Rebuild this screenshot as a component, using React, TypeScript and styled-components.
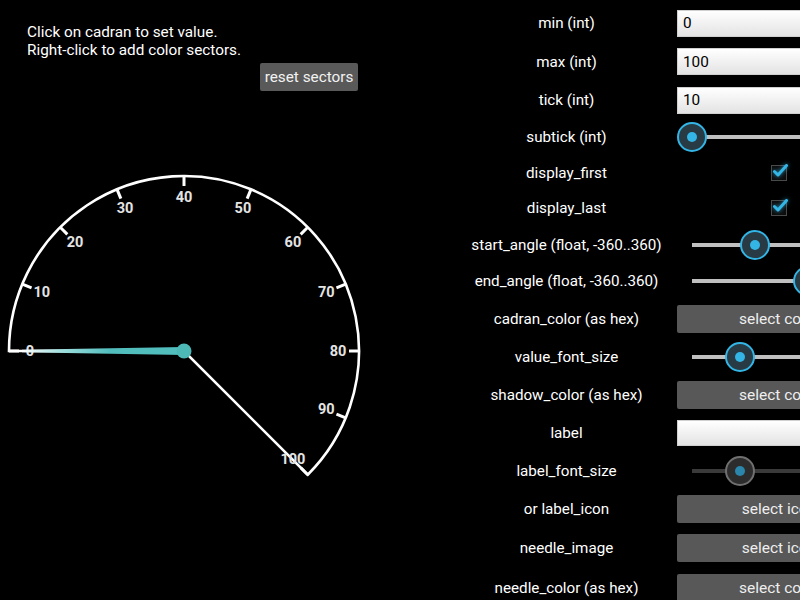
import React from 'react';
import styled, { createGlobalStyle } from 'styled-components';

const GlobalStyle = createGlobalStyle`
  html, body { margin: 0; padding: 0; background: #000; overflow: hidden; }
  body { font-family: Roboto, "Noto Sans", sans-serif; color: #fff; }
  * { box-sizing: border-box; }
`;

const Screen = styled.div`
  display: flex;
  width: 800px;
  height: 600px;
  overflow: hidden;
  background: #000;
`;

const LeftPanel = styled.div`
  width: 458px;
  flex: none;
  display: flex;
  flex-direction: column;
  align-items: flex-start;
`;

const Hint = styled.div`
  padding: 23px 0 0 27px;
  font-size: 15.3px;
  line-height: 18px;
  color: #fff;
`;

const ResetButton = styled.button`
  margin: 4px 0 0 260px;
  width: 98px;
  height: 28px;
  padding: 0;
  border: none;
  border-radius: 2px;
  background: #595959;
  color: #f2f2f2;
  font-family: Roboto, sans-serif;
  font-size: 15.3px;
`;

const GaugeSvg = styled.svg`
  display: block;
  flex: none;
`;

const RightPanel = styled.div`
  flex: none;
  width: 423px;
  padding-top: 4px;
  display: flex;
  flex-direction: column;
`;

const Row = styled.div<{ $h: number }>`
  flex: none;
  display: grid;
  grid-template-columns: 217px 204px;
  column-gap: 2px;
  height: ${(p) => p.$h}px;
  align-items: center;
`;

const Label = styled.div`
  text-align: center;
  font-size: 15.2px;
  color: #fff;
  white-space: nowrap;
`;

const TextField = styled.input<{ $h: number }>`
  width: 100%;
  height: ${(p) => p.$h}px;
  padding: 0 5px;
  border: 1px solid #d0d0d0;
  background: linear-gradient(#ffffff, #e3e3e3);
  color: #000;
  font-family: Roboto, sans-serif;
  font-size: 15.3px;
  outline: none;
`;

const SelectButton = styled.button`
  width: 100%;
  height: 28px;
  padding: 0;
  border: none;
  border-radius: 2px;
  background: #585858;
  color: #eeeeee;
  font-family: Roboto, sans-serif;
  font-size: 15.5px;
  text-align: center;
`;

const SliderBox = styled.div`
  position: relative;
  width: 100%;
  height: 30px;
  display: flex;
  align-items: center;
  padding: 0 15px;
`;

const Track = styled.div<{ $disabled?: boolean }>`
  flex: 1;
  height: 4px;
  background: ${(p) => (p.$disabled ? '#3a3a3a' : '#bfbfbf')};
`;

const Thumb = styled.div<{ $disabled?: boolean }>`
  position: absolute;
  top: 0;
  width: 30px;
  height: 30px;
  border-radius: 50%;
  border: 2.5px solid ${(p) => (p.$disabled ? '#707070' : '#33b5e5')};
  background: ${(p) => (p.$disabled ? '#2c2c2c' : '#283a44')};
  display: flex;
  align-items: center;
  justify-content: center;
  &::after {
    content: '';
    width: 10px;
    height: 10px;
    border-radius: 50%;
    background: ${(p) => (p.$disabled ? '#2a86aa' : '#33b5e5')};
  }
`;

const CheckCell = styled.div`
  display: flex;
  justify-content: center;
  align-items: center;
`;

const CheckBox = styled.div`
  position: relative;
  width: 16px;
  height: 16px;
  border: 1.5px solid #4a4a4a;
  background: #0c0c0c;
`;

const CheckMark = styled.svg`
  position: absolute;
  left: 0px;
  top: -3px;
  overflow: visible;
  filter: drop-shadow(0 0 2px rgba(51, 181, 229, 0.8));
`;

type RowDef =
  | { label: string; h: number; kind: 'input'; value: string; fh: number }
  | { label: string; h: number; kind: 'slider'; pct: number; disabled?: boolean }
  | { label: string; h: number; kind: 'check' }
  | { label: string; h: number; kind: 'button'; text: string };

const rows: RowDef[] = [
  { label: 'min (int)', h: 38, kind: 'input', value: '0', fh: 27 },
  { label: 'max (int)', h: 39, kind: 'input', value: '100', fh: 27 },
  { label: 'tick (int)', h: 38, kind: 'input', value: '10', fh: 27 },
  { label: 'subtick (int)', h: 36, kind: 'slider', pct: 0 },
  { label: 'display_first', h: 35, kind: 'check' },
  { label: 'display_last', h: 36, kind: 'check' },
  { label: 'start_angle (float, -360..360)', h: 37, kind: 'slider', pct: 0.362 },
  { label: 'end_angle (float, -360..360)', h: 36, kind: 'slider', pct: 0.665 },
  { label: 'cadran_color (as hex)', h: 39, kind: 'button', text: 'select color' },
  { label: 'value_font_size', h: 38, kind: 'slider', pct: 0.276 },
  { label: 'shadow_color (as hex)', h: 38, kind: 'button', text: 'select color' },
  { label: 'label', h: 38, kind: 'input', value: '', fh: 26 },
  { label: 'label_font_size', h: 38, kind: 'slider', pct: 0.276, disabled: true },
  { label: 'or label_icon', h: 37, kind: 'button', text: 'select icon' },
  { label: 'needle_image', h: 41, kind: 'button', text: 'select icon' },
  { label: 'needle_color (as hex)', h: 40, kind: 'button', text: 'select color' },
];

const Widget: React.FC<{ row: RowDef }> = ({ row }) => {
  switch (row.kind) {
    case 'input':
      return <TextField $h={row.fh} value={row.value} readOnly />;
    case 'button':
      return <SelectButton>{row.text}</SelectButton>;
    case 'check':
      return (
        <CheckCell>
          <CheckBox>
            <CheckMark width="16" height="16" viewBox="0 0 16 16">
              <path d="M2.5 8.5 L6 12 L14.5 2.5" fill="none" stroke="#33b5e5" strokeWidth="3" strokeLinecap="round" strokeLinejoin="round" />
            </CheckMark>
          </CheckBox>
        </CheckCell>
      );
    case 'slider':
      return (
        <SliderBox>
          <Track $disabled={row.disabled} />
          <Thumb $disabled={row.disabled} style={{ left: `calc(${row.pct} * (100% - 30px))` }} />
        </SliderBox>
      );
  }
};

const Gauge: React.FC = () => {
  const cx = 184;
  const cy = 260;
  const R = 175;
  const rad = (d: number) => (d * Math.PI) / 180;
  const pt = (deg: number, r: number) => [cx + r * Math.cos(rad(deg)), cy - r * Math.sin(rad(deg))];
  const [sx, sy] = pt(180, R);
  const [ex, ey] = pt(-45, R);
  const ticks = Array.from({ length: 11 }, (_, i) => {
    const a = 180 - i * 22.5;
    const [x1, y1] = pt(a, R);
    const [x2, y2] = pt(a, R - 10);
    const [lx, ly] = pt(a, 154);
    return { i, x1, y1, x2, y2, lx, ly };
  });
  return (
    <GaugeSvg width="400" height="400" viewBox="0 0 400 400">
      <defs>
        <linearGradient id="needleGrad" gradientUnits="userSpaceOnUse" x1="22" y1="0" x2="110" y2="0">
          <stop offset="0" stopColor="#ffffff" />
          <stop offset="0.45" stopColor="#9fdede" />
          <stop offset="1" stopColor="#52bdbd" />
        </linearGradient>
      </defs>
      <path
        d={`M ${sx} ${sy} A ${R} ${R} 0 1 1 ${ex} ${ey} L ${cx} ${cy} Z`}
        fill="none"
        stroke="#fff"
        strokeWidth="2.6"
        strokeLinejoin="miter"
      />
      {ticks.map((t) => (
        <line key={`t${t.i}`} x1={t.x1} y1={t.y1} x2={t.x2} y2={t.y2} stroke="#fff" strokeWidth="3" />
      ))}
      {ticks.map((t) => (
        <text
          key={`l${t.i}`}
          x={t.lx}
          y={t.ly}
          fill="#e4e4e4"
          fontFamily="Roboto, sans-serif"
          fontWeight="700"
          fontSize="14.5"
          textAnchor="middle"
          dominantBaseline="central"
        >
          {t.i * 10}
        </text>
      ))}
      <polygon points={`${cx},${cy - 4} ${cx},${cy + 4} 22,${cy + 1.2} 22,${cy - 1.2}`} fill="url(#needleGrad)" />
      <circle cx={cx} cy={cy} r="7.5" fill="#4cb9b6" />
    </GaugeSvg>
  );
};

export default function App() {
  return (
    <>
      <GlobalStyle />
      <Screen>
        <LeftPanel>
          <Hint>
            Click on cadran to set value.
            <br />
            Right-click to add color sectors.
          </Hint>
          <ResetButton>reset sectors</ResetButton>
          <Gauge />
        </LeftPanel>
        <RightPanel>
          {rows.map((r) => (
            <Row key={r.label} $h={r.h}>
              <Label>{r.label}</Label>
              <Widget row={r} />
            </Row>
          ))}
        </RightPanel>
      </Screen>
    </>
  );
}
